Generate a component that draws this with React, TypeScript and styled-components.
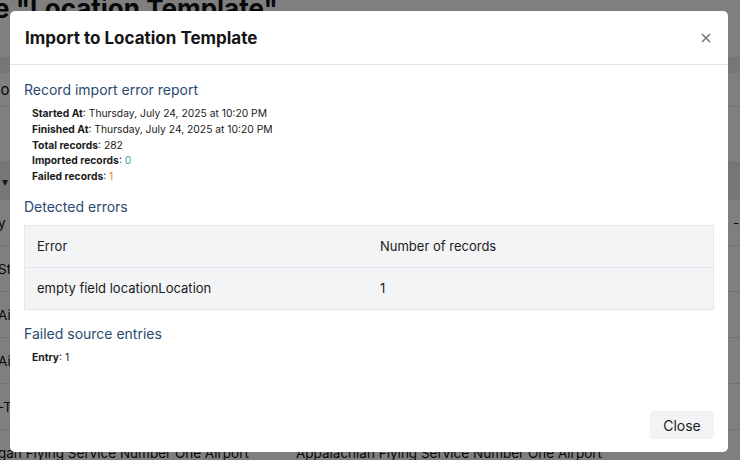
import styled, { createGlobalStyle } from "styled-components";

const GlobalStyle = createGlobalStyle`
  html, body {
    margin: 0;
    padding: 0;
    width: 740px;
    height: 460px;
    overflow: hidden;
    background: #ffffff;
  }
  * {
    box-sizing: border-box;
  }
`;

const Page = styled.div`
  position: relative;
  width: 740px;
  height: 460px;
  overflow: hidden;
  font-family: "Inter", "Liberation Sans", sans-serif;
  color: #111;
`;

const PageTitle = styled.h1`
  margin: -7px 0 0 -6px;
  font-size: 26px;
  font-weight: 700;
  line-height: 32px;
  white-space: nowrap;
`;

const Toolbar = styled.div`
  height: 16px;
  margin-top: 32px;
  background: #ececec;
`;

const SubBar = styled.div`
  height: 34px;
  border-bottom: 1px solid #e2e2e2;
  display: flex;
  align-items: center;
  font-size: 15px;
  margin-left: -8px;
  white-space: nowrap;
`;

const Spacer = styled.div`
  height: 56px;
  border-bottom: 1px solid #e2e2e2;
`;

const HeadBand = styled.div`
  height: 37px;
  background: #ececec;
  display: flex;
  align-items: center;
  padding-left: 2px;
  color: #333;
  font-size: 12px;
`;

const BgRow = styled.div`
  height: 46px;
  border-bottom: 1px solid #e2e2e2;
  display: grid;
  grid-template-columns: 298px 437px 1fr;
  align-items: center;
  font-size: 13.5px;
  white-space: nowrap;
  margin-left: -2px;
`;

const BgCell = styled.div`
  overflow: hidden;
`;

const Overlay = styled.div`
  position: absolute;
  inset: 0;
  background: rgba(0, 0, 0, 0.5);
  padding: 11px 12px 8px 10px;
`;

const Modal = styled.div`
  height: 100%;
  background: #ffffff;
  border-radius: 5px;
  display: flex;
  flex-direction: column;
  font-family: "Inter", "Liberation Sans", sans-serif;
`;

const Header = styled.div`
  height: 54px;
  border-bottom: 1px solid #dfe6ef;
  display: flex;
  align-items: center;
  justify-content: space-between;
  padding: 0 14px 0 15px;
`;

const Title = styled.h2`
  margin: 0;
  font-size: 17px;
  font-weight: 700;
  color: #151515;
`;

const CloseX = styled.button`
  border: none;
  background: none;
  padding: 0;
  width: 16px;
  height: 16px;
  display: flex;
  align-items: center;
  justify-content: center;
  color: #7a7a7a;
`;

const Body = styled.div`
  flex: 1;
  padding: 15px 14px 0 14px;
  display: flex;
  flex-direction: column;
`;

const SectionTitle = styled.h3`
  margin: 0 0 6px 0;
  font-size: 14px;
  font-weight: 400;
  color: #2b4a6f;
  line-height: 20px;
`;

const Details = styled.div`
  padding-left: 8px;
  margin-bottom: 12px;
`;

const Line = styled.div`
  font-size: 10.3px;
  line-height: 15.8px;
  color: #1b1b1b;
  white-space: nowrap;
`;

const Label = styled.span`
  font-weight: 700;
`;

const Value = styled.span<{ $tone?: "ok" | "fail" }>`
  color: ${(p) =>
    p.$tone === "ok" ? "#3aa89a" : p.$tone === "fail" ? "#f0782e" : "#1b1b1b"};
`;

const Table = styled.div`
  border: 1px solid #e4e7eb;
  background: #f3f4f6;
  margin: 2px 0 14px;
`;

const TableRow = styled.div<{ $head?: boolean }>`
  height: ${(p) => (p.$head ? 42 : 41)}px;
  display: grid;
  grid-template-columns: 343px 1fr;
  align-items: center;
  padding-left: 12px;
  font-size: 13px;
  color: #1b1b1b;
  border-bottom: ${(p) => (p.$head ? "1px solid #e4e7eb" : "none")};
`;

const Footer = styled.div`
  display: flex;
  justify-content: flex-end;
  padding: 0 14px 13px 0;
`;

const Button = styled.button`
  width: 64px;
  height: 28px;
  border: none;
  border-radius: 4px;
  background: #f2f3f5;
  font-family: "Inter", "Liberation Sans", sans-serif;
  font-size: 14px;
  color: #1b1b1b;
`;

const details: { label: string; value: string; tone?: "ok" | "fail" }[] = [
  { label: "Started At", value: "Thursday, July 24, 2025 at 10:20 PM" },
  { label: "Finished At", value: "Thursday, July 24, 2025 at 10:20 PM" },
  { label: "Total records", value: "282" },
  { label: "Imported records", value: "0", tone: "ok" },
  { label: "Failed records", value: "1", tone: "fail" },
];

const bgRows = [
  ["y Field", "Bay Field Airport", "-"],
  ["Stockton Airfield", "Stockton Airfield", ""],
  ["Airport One", "Airport One", ""],
  ["Airport Two", "Airport Two", ""],
  ["-Town Airstrip", "-Town Airstrip", ""],
  ["gan Flying Service Number One Airport", "Appalachian Flying Service Number One Airport", ""],
];

export default function App() {
  return (
    <>
      <GlobalStyle />
      <Page>
        <PageTitle>e "Location Template"</PageTitle>
        <Toolbar />
        <SubBar>cols</SubBar>
        <Spacer />
        <HeadBand>▾</HeadBand>
        {bgRows.map(([a, b, c]) => (
          <BgRow key={a}>
            <BgCell>{a}</BgCell>
            <BgCell>{b}</BgCell>
            <BgCell>{c}</BgCell>
          </BgRow>
        ))}
        <Overlay>
          <Modal>
            <Header>
              <Title>Import to Location Template</Title>
              <CloseX aria-label="Close">
                <svg width="10" height="10" viewBox="0 0 10 10">
                  <path d="M1 1L9 9M9 1L1 9" stroke="currentColor" strokeWidth="1.6" />
                </svg>
              </CloseX>
            </Header>
            <Body>
              <SectionTitle>Record import error report</SectionTitle>
              <Details>
                {details.map((d) => (
                  <Line key={d.label}>
                    <Label>{d.label}</Label>: <Value $tone={d.tone}>{d.value}</Value>
                  </Line>
                ))}
              </Details>
              <SectionTitle>Detected errors</SectionTitle>
              <Table>
                <TableRow $head>
                  <span>Error</span>
                  <span>Number of records</span>
                </TableRow>
                <TableRow>
                  <span>empty field locationLocation</span>
                  <span>1</span>
                </TableRow>
              </Table>
              <SectionTitle>Failed source entries</SectionTitle>
              <Details>
                <Line>
                  <Label>Entry</Label>: <Value>1</Value>
                </Line>
              </Details>
            </Body>
            <Footer>
              <Button>Close</Button>
            </Footer>
          </Modal>
        </Overlay>
      </Page>
    </>
  );
}
